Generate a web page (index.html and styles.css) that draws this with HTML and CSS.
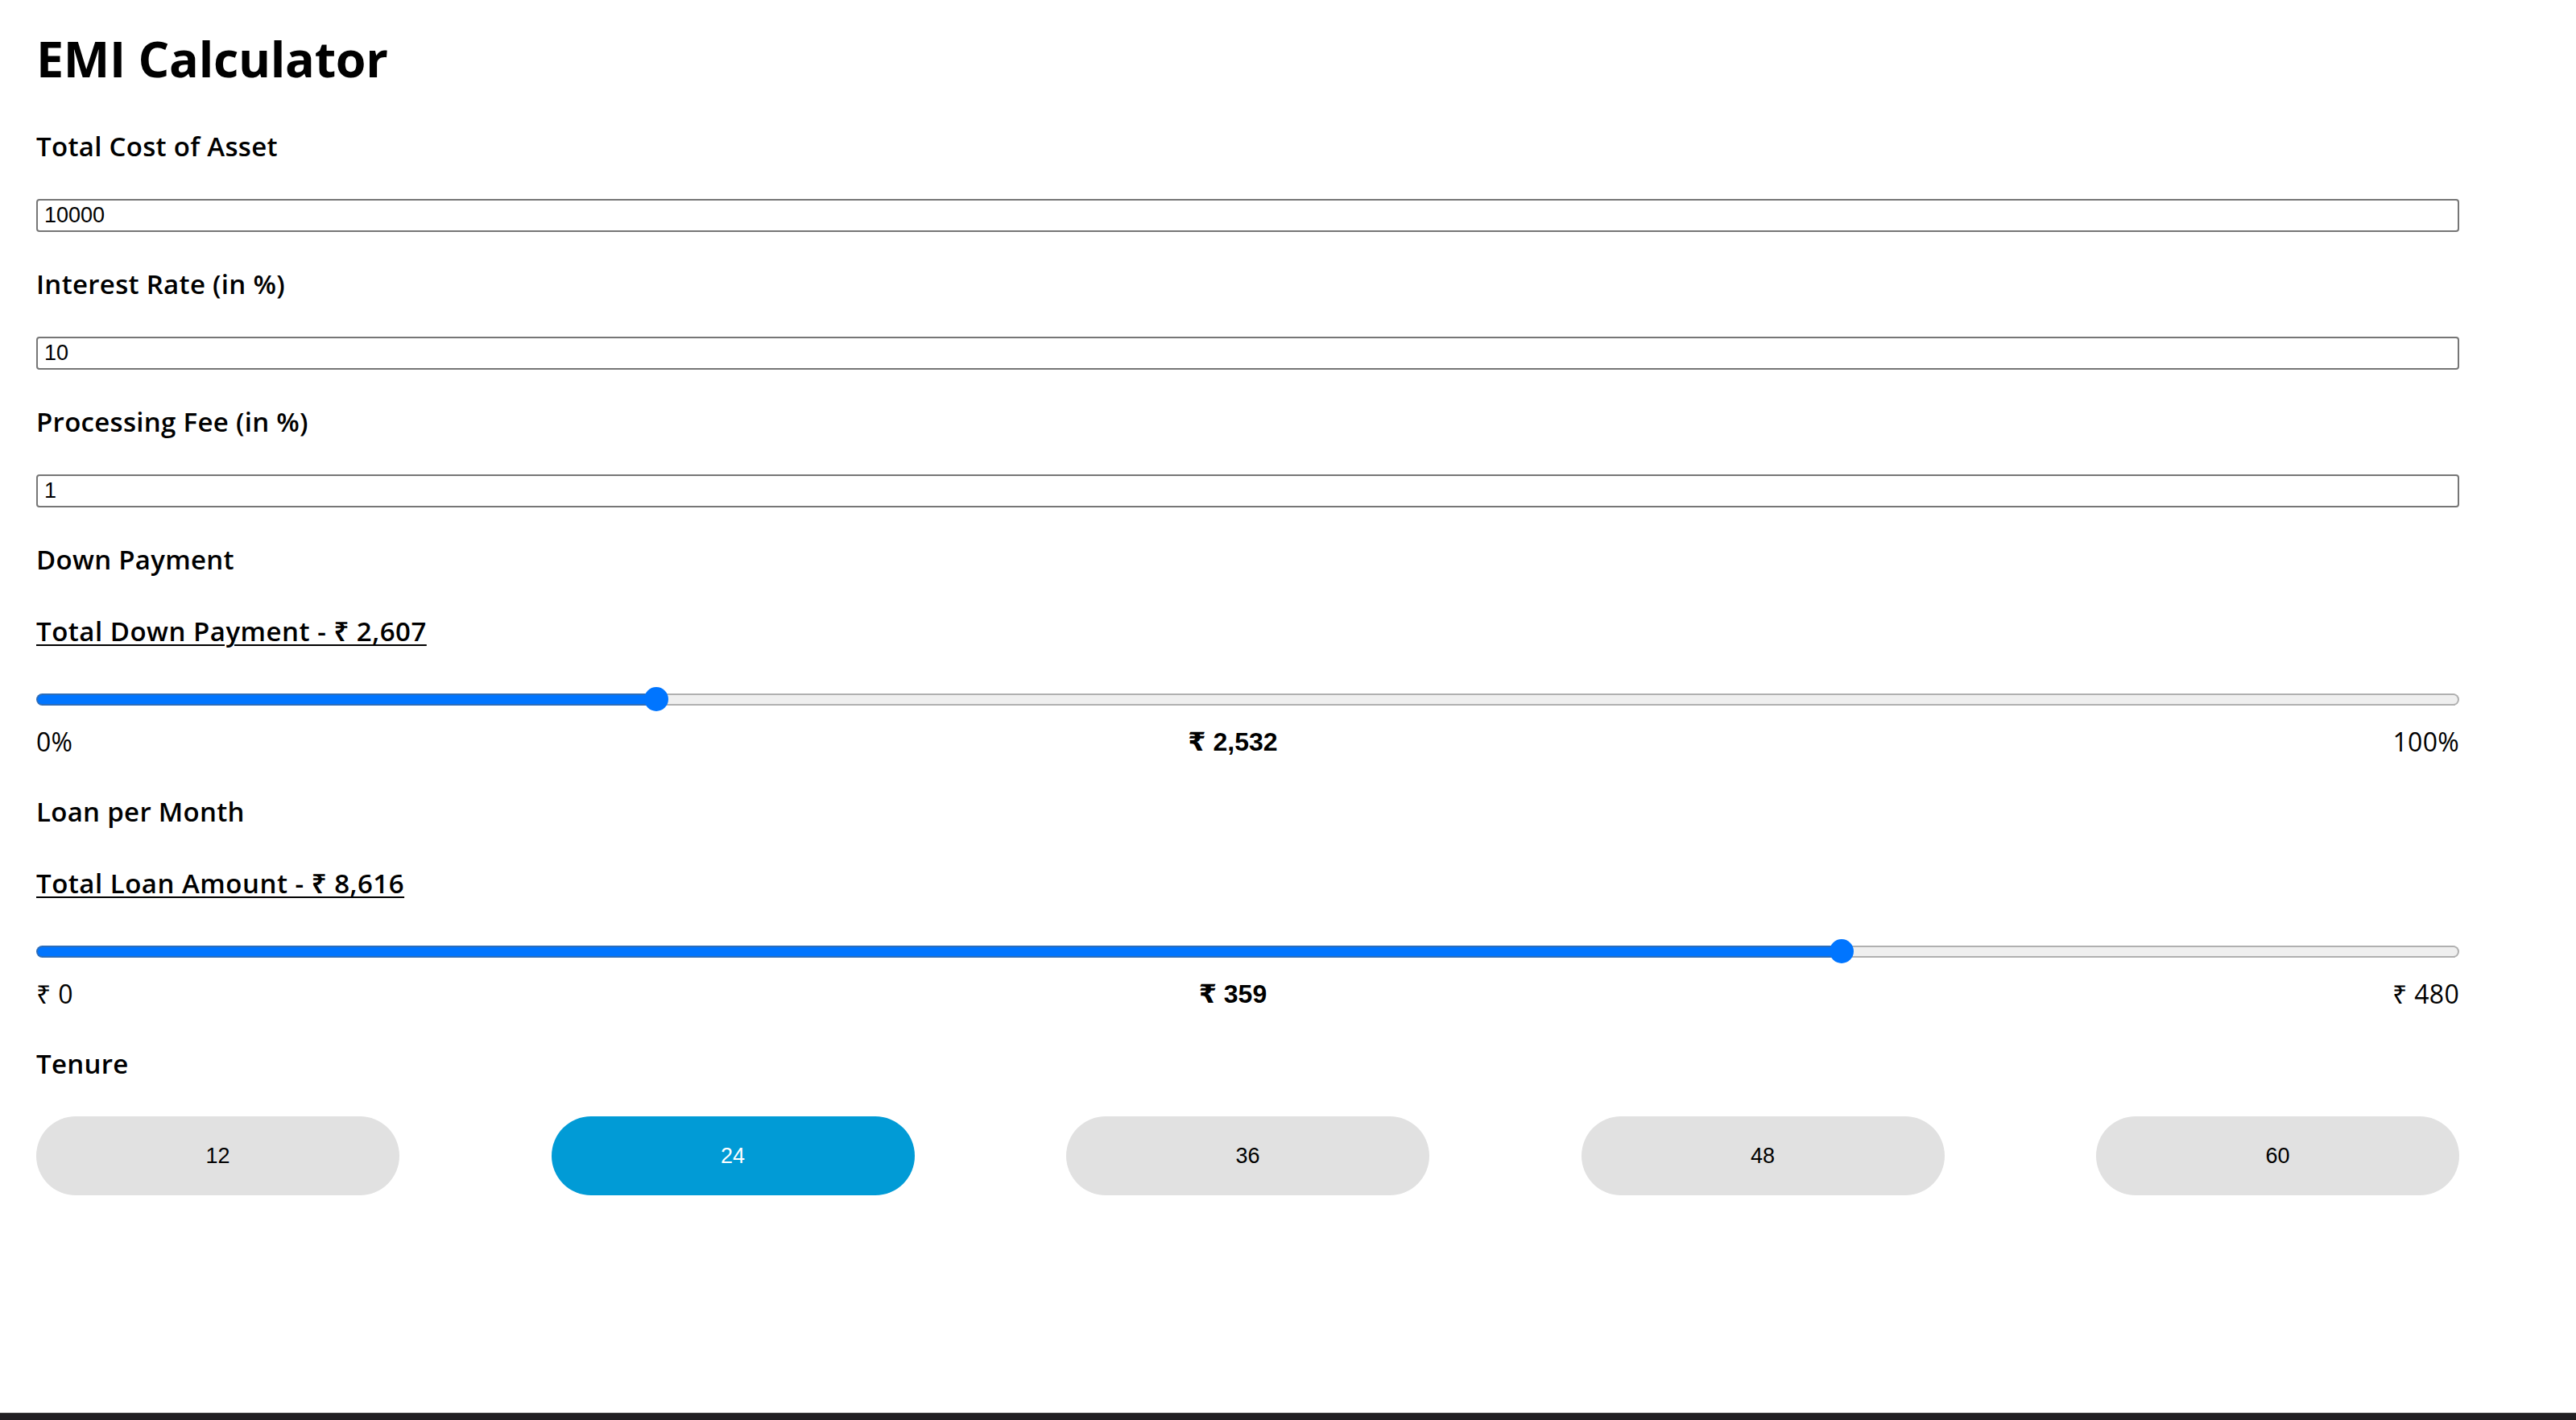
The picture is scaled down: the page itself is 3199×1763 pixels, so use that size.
FILE: index.html
```html
<!DOCTYPE html>
<html lang="en">
<head>
<meta charset="utf-8">
<title>EMI Calculator</title>
<link rel="stylesheet" href="styles.css">
</head>
<body>
<main class="page">
  <h1 class="title">EMI Calculator</h1>

  <label class="label" for="cost">Total Cost of Asset</label>
  <input class="field" id="cost" type="number" value="10000">

  <label class="label" for="rate">Interest Rate (in %)</label>
  <input class="field" id="rate" type="number" value="10">

  <label class="label" for="fee">Processing Fee (in %)</label>
  <input class="field" id="fee" type="number" value="1">

  <div class="label">Down Payment</div>
  <div class="label total">Total Down Payment - ₹ 2,607</div>
  <input class="slider" type="range" min="0" max="10000" step="any" value="2532" style="--f: 0.2532">
  <div class="scale">
    <span class="scale-end">0%</span>
    <b class="scale-value">₹ 2,532</b>
    <span class="scale-end">100%</span>
  </div>

  <div class="label">Loan per Month</div>
  <div class="label total">Total Loan Amount - ₹ 8,616</div>
  <input class="slider" type="range" min="0" max="480" step="any" value="359" style="--f: 0.7479">
  <div class="scale">
    <span class="scale-end">₹ 0</span>
    <b class="scale-value">₹ 359</b>
    <span class="scale-end">₹ 480</span>
  </div>

  <div class="label">Tenure</div>
  <div class="tenure">
    <button class="tenure-btn" type="button">12</button>
    <button class="tenure-btn is-selected" type="button">24</button>
    <button class="tenure-btn" type="button">36</button>
    <button class="tenure-btn" type="button">48</button>
    <button class="tenure-btn" type="button">60</button>
  </div>
</main>
<div class="bottom-bar"></div>
</body>
</html>
```

FILE: styles.css
```css
* {
  box-sizing: border-box;
}

html, body {
  margin: 0;
  padding: 0;
  background: #ffffff;
}

body {
  min-height: 100vh;
  display: flex;
  flex-direction: column;
  font-family: "Open Sans", "Noto Sans", sans-serif;
  color: #000000;
}

.page {
  width: 3009px;
  margin-left: 45px;
  padding-top: 25px;
  display: flex;
  flex-direction: column;
  flex: 1;
}

.title {
  margin: 0 0 37px;
  font-size: 61px;
  line-height: 96px;
  font-weight: 700;
  letter-spacing: -0.3px;
}

.label {
  display: block;
  margin: 0 0 41px;
  font-size: 33px;
  line-height: 48px;
  font-weight: 600;
  letter-spacing: 0.3px;
}

.total {
  text-decoration: underline;
  text-decoration-thickness: 2px;
  text-underline-offset: 4px;
  margin-bottom: 45px;
  letter-spacing: 0.5px;
}

.field {
  display: block;
  width: 100%;
  height: 41px;
  margin: 0 0 41px;
  padding: 0 8px;
  border: 2px solid #767676;
  border-radius: 4px;
  font-family: "Liberation Sans", Arial, sans-serif;
  font-size: 27px;
  color: #000000;
  background: #ffffff;
  -moz-appearance: textfield;
}

.field::-webkit-outer-spin-button,
.field::-webkit-inner-spin-button {
  -webkit-appearance: none;
  margin: 0;
}

.slider {
  -webkit-appearance: none;
  appearance: none;
  display: block;
  width: 100%;
  height: 30px;
  margin: 0 0 14px;
  padding: 0;
  background: transparent;
}

.slider::-webkit-slider-runnable-track {
  height: 15px;
  border: 2px solid rgba(100, 100, 100, 0.45);
  border-radius: 8px;
  background-origin: border-box;
  background-image: linear-gradient(90deg,
    #0075ff 0,
    #0075ff calc(15px + (100% - 30px) * var(--f)),
    #efefef calc(15px + (100% - 30px) * var(--f)),
    #efefef 100%);
}

.slider::-webkit-slider-thumb {
  -webkit-appearance: none;
  appearance: none;
  width: 30px;
  height: 30px;
  margin-top: -9.5px;
  border: none;
  border-radius: 50%;
  background: #0075ff;
}

.scale {
  display: flex;
  justify-content: space-between;
  align-items: center;
  height: 48px;
  margin-bottom: 39px;
  font-size: 32px;
  line-height: 48px;
}

.scale-end {
  font-weight: 400;
  letter-spacing: 0.3px;
}

.scale-value {
  font-family: "Liberation Sans", "DejaVu Sans", Arial, sans-serif;
  font-weight: 700;
  font-size: 32px;
}

.tenure {
  display: flex;
  justify-content: space-between;
}

.tenure-btn {
  width: 451px;
  height: 98px;
  border: none;
  border-radius: 49px;
  background: #e1e1e1;
  color: #000000;
  font-family: "Liberation Sans", Arial, sans-serif;
  font-size: 27px;
  padding: 0;
}

.tenure-btn.is-selected {
  background: #019bd6;
  color: #ffffff;
}

.bottom-bar {
  height: 9px;
  background: #211f22;
  border-top: 1px solid #3c3c3c;
}
```
